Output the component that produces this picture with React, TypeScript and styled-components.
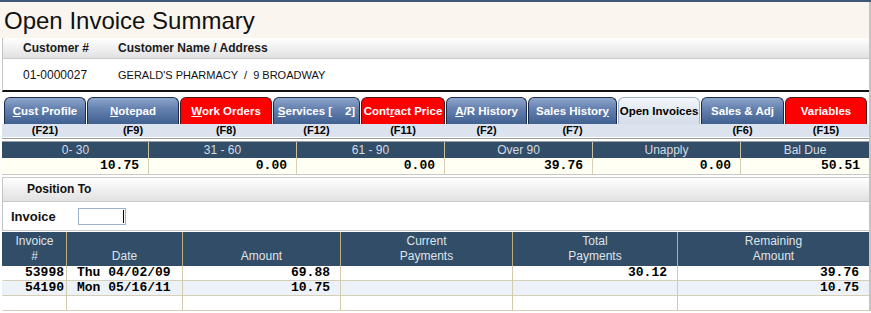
import React from 'react';
import styled, { createGlobalStyle, css } from 'styled-components';

// --- data ---

type TabKind = 'blue' | 'red' | 'active';

const tabs: { label: React.ReactNode; key: string; width: number; kind: TabKind }[] = [
  { label: <><u>C</u>ust Profile</>, key: '(F21)', width: 82, kind: 'blue' },
  { label: <><u>N</u>otepad</>, key: '(F9)', width: 92, kind: 'blue' },
  { label: <><u>W</u>ork Orders</>, key: '(F8)', width: 92, kind: 'red' },
  { label: <><u>S</u>ervices [    2]</>, key: '(F12)', width: 87, kind: 'blue' },
  { label: <>Cont<u>r</u>act Price</>, key: '(F11)', width: 84, kind: 'red' },
  { label: <><u>A</u>/R History</>, key: '(F2)', width: 81, kind: 'blue' },
  { label: <>Sales Histor<u>y</u></>, key: '(F7)', width: 89, kind: 'blue' },
  { label: <>Open Invoices</>, key: '', width: 82, kind: 'active' },
  { label: <>Sales &amp; Ad<u>j</u></>, key: '(F6)', width: 83, kind: 'blue' },
  { label: <>Variables</>, key: '(F15)', width: 82, kind: 'red' },
];

const aging = [
  { label: '0- 30', value: '10.75' },
  { label: '31 - 60', value: '0.00' },
  { label: '61 - 90', value: '0.00' },
  { label: 'Over 90', value: '39.76' },
  { label: 'Unapply', value: '0.00' },
  { label: 'Bal Due', value: '50.51' },
];

const invoiceHead: [string, string][] = [
  ['Invoice', '#'],
  ['', 'Date'],
  ['', 'Amount'],
  ['Current', 'Payments'],
  ['Total', 'Payments'],
  ['Remaining', 'Amount'],
];

const invoices = [
  ['53998', 'Thu 04/02/09', '69.88', '', '30.12', '39.76'],
  ['54190', 'Mon 05/16/11', '10.75', '', '', '10.75'],
  ['', '', '', '', '', ''],
];

// --- styles ---

const GlobalStyle = createGlobalStyle`
  html, body { margin: 0; padding: 0; background: #fff; }
  body { font-family: 'Liberation Sans', Arial, sans-serif; }
`;

const Page = styled.div`
  width: 871px;
  height: 313px;
  overflow: hidden;
  box-sizing: border-box;
  background: #fff;
  border-top: 2px solid #3d5878;
`;

const TitleBar = styled.h1`
  margin: 0;
  height: 36px;
  box-sizing: border-box;
  padding: 7px 0 0 4px;
  background: #faf6ef;
  border-right: 2px solid #c4c4c4;
  font: normal 24px/1 'Liberation Sans', Arial, sans-serif;
  color: #111;
`;

const Content = styled.div`
  margin-left: 2px;
  width: 867px;
  border-right: 2px solid #c4c4c4;
`;

const CustomerBlock = styled.section`
  border-left: 1px solid #c4c4c4;
  border-bottom: 2px solid #111;
`;

const CustomerGrid = styled.div`
  display: grid;
  grid-template-columns: 95px 1fr;
  align-items: center;
  padding-left: 20px;
`;

const CustomerHead = styled(CustomerGrid)`
  height: 20px;
  background: linear-gradient(#ffffff, #e1e1e1);
  border-bottom: 1px solid #cacaca;
  font-size: 12px;
  font-weight: bold;
  color: #1a1a1a;
`;

const CustomerRow = styled(CustomerGrid)`
  height: 31px;
  color: #111;
`;

const CustNo = styled.span`
  font-size: 12px;
`;

const CustName = styled.span`
  font-size: 11px;
  white-space: pre;
`;

const TabStrip = styled.nav`
  display: flex;
  gap: 1px;
  padding: 5px 0 0 2px;
`;

const tabLook = {
  blue: css`
    background: linear-gradient(#8ea6cb 0%, #6682b1 40%, #40608f 100%);
    border-color: #1b2b4b;
    color: #fff;
  `,
  red: css`
    background: #ff0000;
    border-color: #4a1a1a;
    color: #fff;
  `,
  active: css`
    background: linear-gradient(#f3f6fa, #d3dce8);
    border-color: #9fb1cc;
    color: #000;
  `,
};

const Tab = styled.div<{ $w: number; $kind: TabKind }>`
  width: ${p => p.$w}px;
  height: 27px;
  box-sizing: border-box;
  border: 1px solid;
  border-bottom: none;
  border-radius: 6px 6px 0 0;
  display: flex;
  align-items: center;
  justify-content: center;
  overflow: hidden;
  font-size: 11.5px;
  font-weight: bold;
  white-space: pre;
  ${p => tabLook[p.$kind]}
`;

const KeyRow = styled.div`
  display: flex;
  gap: 1px;
  padding-left: 2px;
  height: 13px;
  background: #dce3ee;
`;

const KeyCell = styled.div<{ $w: number }>`
  width: ${p => p.$w}px;
  text-align: center;
  font-size: 11px;
  font-weight: bold;
  line-height: 13px;
  color: #000;
`;

const DoubleRule = styled.div`
  height: 2px;
  border-top: 1px solid #9c9c9c;
  border-bottom: 1px solid #9c9c9c;
  margin-top: 1px;
`;

const AgingGrid = styled.div`
  display: grid;
  grid-template-columns: 146px repeat(4, 148px) 1fr;
  border-bottom: 1px solid #c8c8c8;
`;

const AgingHead = styled.div<{ $first?: boolean }>`
  height: 16px;
  line-height: 16px;
  background: #324d67;
  color: #d6dce3;
  font-size: 12px;
  text-align: center;
  border-left: 1px solid ${p => (p.$first ? '#324d67' : '#c9c1a2')};
`;

const AgingValue = styled.div<{ $first?: boolean }>`
  height: 16px;
  line-height: 16px;
  background: #fffff4;
  text-align: right;
  padding-right: 9px;
  font: bold 13px 'Liberation Mono', 'DejaVu Sans Mono', monospace;
  color: #000;
  border-left: 1px solid ${p => (p.$first ? '#fffff4' : '#d8d0b4')};
`;

const PositionBlock = styled.section`
  margin-top: 2px;
  border-left: 1px solid #c4c4c4;
  border-top: 1px solid #cacaca;
`;

const PositionHead = styled.div`
  height: 23px;
  line-height: 23px;
  padding-left: 24px;
  background: linear-gradient(#ffffff, #e1e1e1);
  border-bottom: 1px solid #cacaca;
  font-size: 12px;
  font-weight: bold;
  color: #111;
`;

const PositionRow = styled.div`
  height: 28px;
  display: flex;
  align-items: center;
  padding-left: 8px;
  border-bottom: 1px solid #cacaca;
`;

const FieldLabel = styled.label`
  width: 67px;
  font-size: 13px;
  font-weight: bold;
  color: #111;
`;

const InputBox = styled.div`
  width: 48px;
  height: 17px;
  box-sizing: border-box;
  border: 1px solid #9fb0d6;
  display: flex;
  align-items: center;
  justify-content: flex-end;
  padding-right: 1px;
  background: #fff;
`;

const Caret = styled.span`
  width: 1px;
  height: 13px;
  background: #000;
`;

const InvoiceGrid = styled.div`
  margin-top: 1px;
  display: grid;
  grid-template-columns: 64px 116px 158px 172px 165px 1fr;
`;

const HeadCell = styled.div<{ $first?: boolean }>`
  height: 34px;
  box-sizing: border-box;
  padding-top: 2px;
  background: #324d67;
  color: #dfe4ea;
  font-size: 12px;
  line-height: 15px;
  text-align: center;
  border-left: 1px solid ${p => (p.$first ? '#324d67' : '#bdae82')};
`;

const Cell = styled.div<{ $first?: boolean; $alt: boolean; $align: 'left' | 'right' }>`
  height: 15px;
  box-sizing: border-box;
  line-height: 14px;
  background: ${p => (p.$alt ? '#edf1f8' : '#fff')};
  border-bottom: 1px solid #d6ceb6;
  border-left: 1px solid ${p => (p.$first ? 'transparent' : '#d2caae')};
  font: bold 13px/14px 'Liberation Mono', 'DejaVu Sans Mono', monospace;
  color: #000;
  text-align: ${p => p.$align};
  padding: ${p => (p.$align === 'left' ? '0 0 0 10px' : p.$first ? '0 2px 0 0' : '0 10px 0 0')};
  white-space: pre;
`;

const OpenInvoiceSummary: React.FC = () => {
  return (
    <Page>
      <GlobalStyle />
      <TitleBar>Open Invoice Summary</TitleBar>
      <Content>
        <CustomerBlock>
          <CustomerHead>
            <span>Customer #</span>
            <span>Customer Name / Address</span>
          </CustomerHead>
          <CustomerRow>
            <CustNo>01-0000027</CustNo>
            <CustName>GERALD'S PHARMACY  /  9 BROADWAY</CustName>
          </CustomerRow>
        </CustomerBlock>

        <TabStrip>
          {tabs.map((t, i) => (
            <Tab key={i} $w={t.width} $kind={t.kind}>{t.label}</Tab>
          ))}
        </TabStrip>
        <KeyRow>
          {tabs.map((t, i) => (
            <KeyCell key={i} $w={t.width}>{t.key}</KeyCell>
          ))}
        </KeyRow>
        <DoubleRule />

        <AgingGrid>
          {aging.map((a, i) => (
            <AgingHead key={a.label} $first={i === 0}>{a.label}</AgingHead>
          ))}
          {aging.map((a, i) => (
            <AgingValue key={a.label} $first={i === 0}>{a.value}</AgingValue>
          ))}
        </AgingGrid>

        <PositionBlock>
          <PositionHead>Position To</PositionHead>
          <PositionRow>
            <FieldLabel>Invoice</FieldLabel>
            <InputBox><Caret /></InputBox>
          </PositionRow>
        </PositionBlock>

        <InvoiceGrid>
          {invoiceHead.map(([top, bottom], i) => (
            <HeadCell key={i} $first={i === 0}>
              {top || '\u00a0'}
              <br />
              {bottom}
            </HeadCell>
          ))}
          {invoices.map((row, r) =>
            row.map((v, c) => (
              <Cell
                key={`${r}-${c}`}
                $first={c === 0}
                $alt={r === 1}
                $align={c === 1 ? 'left' : 'right'}
              >
                {v}
              </Cell>
            ))
          )}
        </InvoiceGrid>
      </Content>
    </Page>
  );
};

export default OpenInvoiceSummary;
